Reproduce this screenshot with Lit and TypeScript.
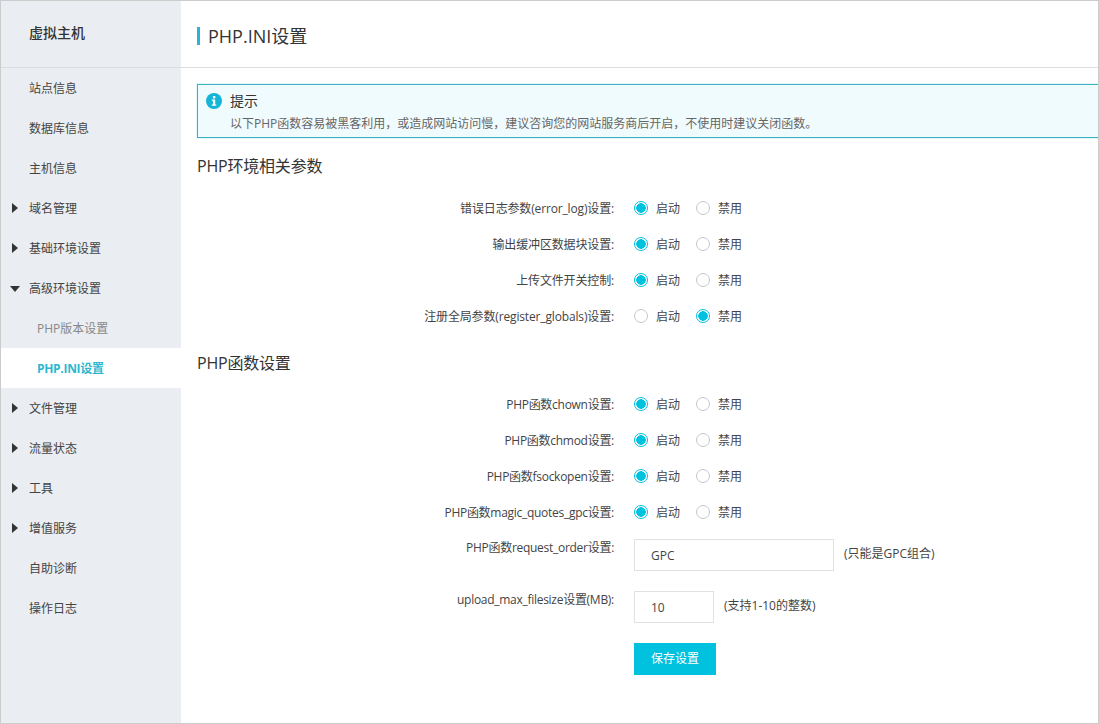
import { LitElement, html, css } from 'lit';
import { customElement } from 'lit/decorators.js';

type NavItem = { label: string; arrow?: 'right' | 'down'; sub?: boolean; active?: boolean };

const NAV: NavItem[] = [
  { label: '站点信息' },
  { label: '数据库信息' },
  { label: '主机信息' },
  { label: '域名管理', arrow: 'right' },
  { label: '基础环境设置', arrow: 'right' },
  { label: '高级环境设置', arrow: 'down' },
  { label: 'PHP版本设置', sub: true },
  { label: 'PHP.INI设置', sub: true, active: true },
  { label: '文件管理', arrow: 'right' },
  { label: '流量状态', arrow: 'right' },
  { label: '工具', arrow: 'right' },
  { label: '增值服务', arrow: 'right' },
  { label: '自助诊断' },
  { label: '操作日志' },
];

const ENV_ROWS: [string, boolean][] = [
  ['错误日志参数(error_log)设置:', true],
  ['输出缓冲区数据块设置:', true],
  ['上传文件开关控制:', true],
  ['注册全局参数(register_globals)设置:', false],
];

const FN_ROWS: [string, boolean][] = [
  ['PHP函数chown设置:', true],
  ['PHP函数chmod设置:', true],
  ['PHP函数fsockopen设置:', true],
  ['PHP函数magic_quotes_gpc设置:', true],
];

@customElement('app-root')
export class AppRoot extends LitElement {
  static override styles = css`
    :host {
      display: block;
      box-sizing: border-box;
      height: 724px;
      border: 1px solid #ccc;
      font-family: 'Open Sans', 'Noto Sans CJK SC', sans-serif;
      font-size: 12px;
      color: #333;
      background: #fff;
      overflow: hidden;
    }
    .layout {
      display: flex;
      height: 100%;
    }
    .side {
      width: 180px;
      flex: none;
      background: #eaedf1;
    }
    .side-head {
      height: 67px;
      box-sizing: border-box;
      border-bottom: 1px solid #d9dde2;
      padding: 22px 0 0 28px;
      font-size: 14px;
      line-height: 20px;
      font-weight: 500;
      color: #333;
    }
    .nav-item {
      position: relative;
      height: 40px;
      line-height: 41px;
      padding-left: 28px;
      color: #444;
    }
    .nav-item.sub {
      padding-left: 36px;
      color: #888;
    }
    .nav-item.active {
      background: #fff;
      color: #2bb8d0;
      font-weight: 700;
      letter-spacing: -0.3px;
    }
    .arrow {
      position: absolute;
      width: 0;
      height: 0;
    }
    .arrow.right {
      left: 11px;
      top: 15px;
      border-left: 6px solid #333;
      border-top: 5px solid transparent;
      border-bottom: 5px solid transparent;
    }
    .arrow.down {
      left: 9px;
      top: 18px;
      border-top: 6px solid #333;
      border-left: 5px solid transparent;
      border-right: 5px solid transparent;
    }
    .main {
      flex: 1;
      min-width: 0;
    }
    .main-head {
      height: 67px;
      box-sizing: border-box;
      border-bottom: 1px solid #ddd;
      padding: 26px 0 0 16px;
    }
    .title {
      border-left: 3px solid #2bb3d4;
      padding-left: 8px;
      height: 18px;
      line-height: 18px;
      font-size: 18px;
      color: #333;
    }
    .body {
      padding: 16px 0 0 16px;
    }
    .tip {
      height: 54px;
      box-sizing: border-box;
      border: 1px solid #3fb0c4;
      border-right: none;
      background: #f0fbfe;
      position: relative;
      padding: 5px 0 0 32px;
      box-shadow: 0 0 0 1px #e4f8fc;
    }
    .tip svg {
      position: absolute;
      left: 8px;
      top: 8px;
    }
    .tip-title {
      font-size: 14px;
      line-height: 22px;
      color: #333;
    }
    .tip-text {
      margin-top: 2px;
      font-size: 12px;
      line-height: 20px;
      color: #666;
    }
    h2 {
      margin: 0;
      font-size: 16px;
      line-height: 24px;
      font-weight: 400;
      letter-spacing: -0.2px;
      color: #333;
    }
    .h-env {
      margin-top: 16px;
      margin-bottom: 12px;
    }
    .h-fn {
      margin-top: 17px;
      margin-bottom: 11px;
    }
    .row {
      display: flex;
      align-items: center;
      height: 36px;
    }
    .label {
      width: 417px;
      flex: none;
      text-align: right;
      font-size: 12px;
      letter-spacing: -0.15px;
      color: #444;
    }
    .label.tight {
      letter-spacing: -0.28px;
    }
    .opts {
      display: flex;
      align-items: center;
      margin-left: 20px;
    }
    .radio {
      width: 14px;
      height: 14px;
      box-sizing: border-box;
      border: 1px solid #c4c8cc;
      border-radius: 50%;
      background: #fff;
      flex: none;
    }
    .radio.on {
      border-color: #00c1de;
      background: radial-gradient(circle, #00c1de 0, #00c1de 4.5px, #fff 5px);
    }
    .opt-text {
      width: 24px;
      margin: 0 16px 0 8px;
      white-space: nowrap;
      font-size: 12px;
      color: #444;
    }
    .field-row {
      display: flex;
      align-items: flex-start;
      margin-bottom: 20px;
    }
    .field-row.first {
      margin-top: 9px;
    }
    .field-row .label {
      line-height: 16px;
      padding-top: 1px;
    }
    .field {
      margin-left: 20px;
      height: 32px;
      box-sizing: border-box;
      border: 1px solid #e1e1e1;
      padding-left: 16px;
      line-height: 31px;
      font-size: 12px;
      color: #444;
    }
    .hint {
      margin-left: 10px;
      line-height: 30px;
      font-size: 12px;
      color: #444;
    }
    .btn {
      margin-left: 437px;
      width: 82px;
      height: 32px;
      line-height: 32px;
      text-align: center;
      background: #00c1de;
      color: #fff;
      font-size: 12px;
    }
  `;

  private radioRow(label: string, on: boolean, tight = false) {
    return html`
      <div class="row">
        <div class="label ${tight ? 'tight' : ''}">${label}</div>
        <div class="opts">
          <span class="radio ${on ? 'on' : ''}"></span><span class="opt-text">启动</span>
          <span class="radio ${on ? '' : 'on'}"></span><span class="opt-text">禁用</span>
        </div>
      </div>
    `;
  }

  override render() {
    return html`
      <div class="layout">
        <aside class="side">
          <div class="side-head">虚拟主机</div>
          ${NAV.map(
            (n) => html`
              <div class="nav-item ${n.sub ? 'sub' : ''} ${n.active ? 'active' : ''}">
                ${n.arrow ? html`<span class="arrow ${n.arrow}"></span>` : ''}${n.label}
              </div>
            `
          )}
        </aside>
        <main class="main">
          <div class="main-head"><div class="title">PHP.INI设置</div></div>
          <div class="body">
            <div class="tip">
              <svg width="16" height="16" viewBox="0 0 16 16">
                <circle cx="8" cy="8" r="8" fill="#13b5d8"></circle>
                <rect x="6.9" y="3" width="2.4" height="2.4" fill="#fff"></rect>
                <path d="M5.8 6.6h3.4v5h1.1v1.2H5.8v-1.2h1.1V7.8H5.8z" fill="#fff"></path>
              </svg>
              <div class="tip-title">提示</div>
              <div class="tip-text">以下PHP函数容易被黑客利用，或造成网站访问慢，建议咨询您的网站服务商后开启，不使用时建议关闭函数。</div>
            </div>
            <h2 class="h-env">PHP环境相关参数</h2>
            ${ENV_ROWS.map(([l, on]) => this.radioRow(l, on))}
            <h2 class="h-fn">PHP函数设置</h2>
            ${FN_ROWS.map(([l, on]) => this.radioRow(l, on, true))}
            <div class="field-row first">
              <div class="label tight">PHP函数request_order设置:</div>
              <div class="field" style="width:200px">GPC</div>
              <div class="hint">(只能是GPC组合)</div>
            </div>
            <div class="field-row">
              <div class="label tight">upload_max_filesize设置(MB):</div>
              <div class="field" style="width:80px">10</div>
              <div class="hint">(支持1-10的整数)</div>
            </div>
            <div class="btn">保存设置</div>
          </div>
        </main>
      </div>
    `;
  }
}
